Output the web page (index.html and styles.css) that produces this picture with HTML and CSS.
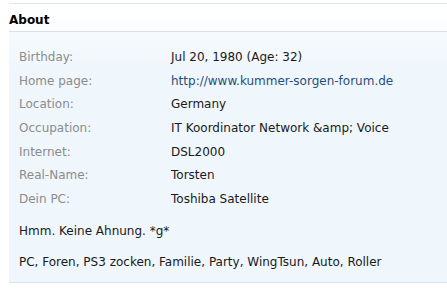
FILE: index.html
```html
<!DOCTYPE html>
<html lang="en">

<head>
    <meta charset="UTF-8">
    <title>About</title>
    <link rel="stylesheet" href="styles.css">
</head>

<body>
    <section class="aboutbox">
        <h3 class="abouthead">About</h3>
        <div class="aboutbody">
            <dl class="pairs">
                <dt>Birthday:</dt>
                <dd>Jul 20, 1980 (Age: 32)</dd>
                <dt>Home page:</dt>
                <dd><a href="#">http://www.kummer-sorgen-forum.de</a></dd>
                <dt>Location:</dt>
                <dd>Germany</dd>
                <dt>Occupation:</dt>
                <dd>IT Koordinator Network &amp;amp; Voice</dd>
                <dt>Internet:</dt>
                <dd>DSL2000</dd>
                <dt>Real-Name:</dt>
                <dd>Torsten</dd>
                <dt>Dein PC:</dt>
                <dd>Toshiba Satellite</dd>
            </dl>
            <p class="freetext">Hmm. Keine Ahnung. *g*</p>
            <p class="freetext last">PC, Foren, PS3 zocken, Familie, Party, WingTsun, Auto, Roller</p>
        </div>
    </section>
</body>

</html>
```

FILE: styles.css
```css
body {
    margin: 0;
    background-color: #fff;
    font-family: 'DejaVu Sans', Tahoma, sans-serif;
    font-size: 12px;
    line-height: 14px;
}

.aboutbox {
    margin: 3px 0 0 9px;
    border-top: 1px solid #dde6ee;
}

.abouthead {
    margin: 0;
    padding: 9px 0 4px 0;
    font-size: 12px;
    line-height: 14px;
    font-weight: bold;
    color: #000;
    border-bottom: 1px solid #d8e2ea;
    background: linear-gradient(#ffffff, #fbfdfe);
}

.aboutbody {
    background: linear-gradient(#f6fafd, #eff6fc 40px);
    padding: 18px 10px 13px 10px;
    border-bottom: 1px solid #d8e2ea;
}

.pairs {
    display: grid;
    grid-template-columns: 152px 1fr;
    row-gap: 9.7px;
    margin: 0;
}

.pairs dt {
    color: #8c8c8c;
}

.pairs dd {
    margin: 0;
    color: #1a1a1a;
}

.pairs a {
    color: #1f4f7f;
    text-decoration: none;
}

.freetext {
    margin: 18px 0 0 0;
    color: #1a1a1a;
}

.freetext.last {
    margin-top: 17px;
}
```
